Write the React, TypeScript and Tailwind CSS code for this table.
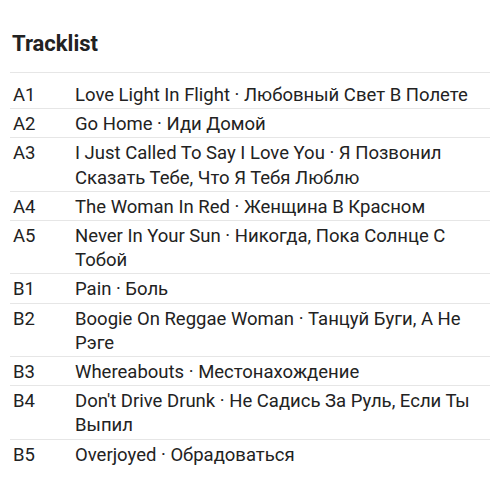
import React from "react";

const tracks: [string, string][] = [
  ["A1", "Love Light In Flight · Любовный Свет В Полете"],
  ["A2", "Go Home · Иди Домой"],
  ["A3", "I Just Called To Say I Love You · Я Позвонил Сказать Тебе, Что Я Тебя Люблю"],
  ["A4", "The Woman In Red · Женщина В Красном"],
  ["A5", "Never In Your Sun · Никогда, Пока Солнце С Тобой"],
  ["B1", "Pain · Боль"],
  ["B2", "Boogie On Reggae Woman · Танцуй Буги, А Не Рэге"],
  ["B3", "Whereabouts · Местонахождение"],
  ["B4", "Don't Drive Drunk · Не Садись За Руль, Если Ты Выпил"],
  ["B5", "Overjoyed · Обрадоваться"],
];

export default function App() {
  return (
    <div className="w-[500px] h-[500px] bg-white text-[#222] px-[10px]">
      <h2
        className="pt-[30px] px-[2px] text-[22px] leading-[28px] font-bold"
        style={{ fontFamily: "Roboto, sans-serif" }}
      >
        Tracklist
      </h2>
      <div
        className="mt-[14px] border-t border-[#e6e6e6]"
        style={{ fontFamily: "Roboto, sans-serif" }}
      >
        {tracks.map(([pos, title], i) => (
          <div
            key={pos}
            className={`flex border-b border-[#e6e6e6] text-[18.5px] leading-[24.2px] ${
              i === 0 ? "pt-[10px] pb-[1px]" : "pt-[3px] pb-[1px]"
            } ${i === tracks.length - 1 ? "border-b-0" : ""}`}
          >
            <div className="w-[65px] shrink-0 pl-[3px]">{pos}</div>
            <div className="flex-1 pr-[3px]">{title}</div>
          </div>
        ))}
      </div>
    </div>
  );
}
